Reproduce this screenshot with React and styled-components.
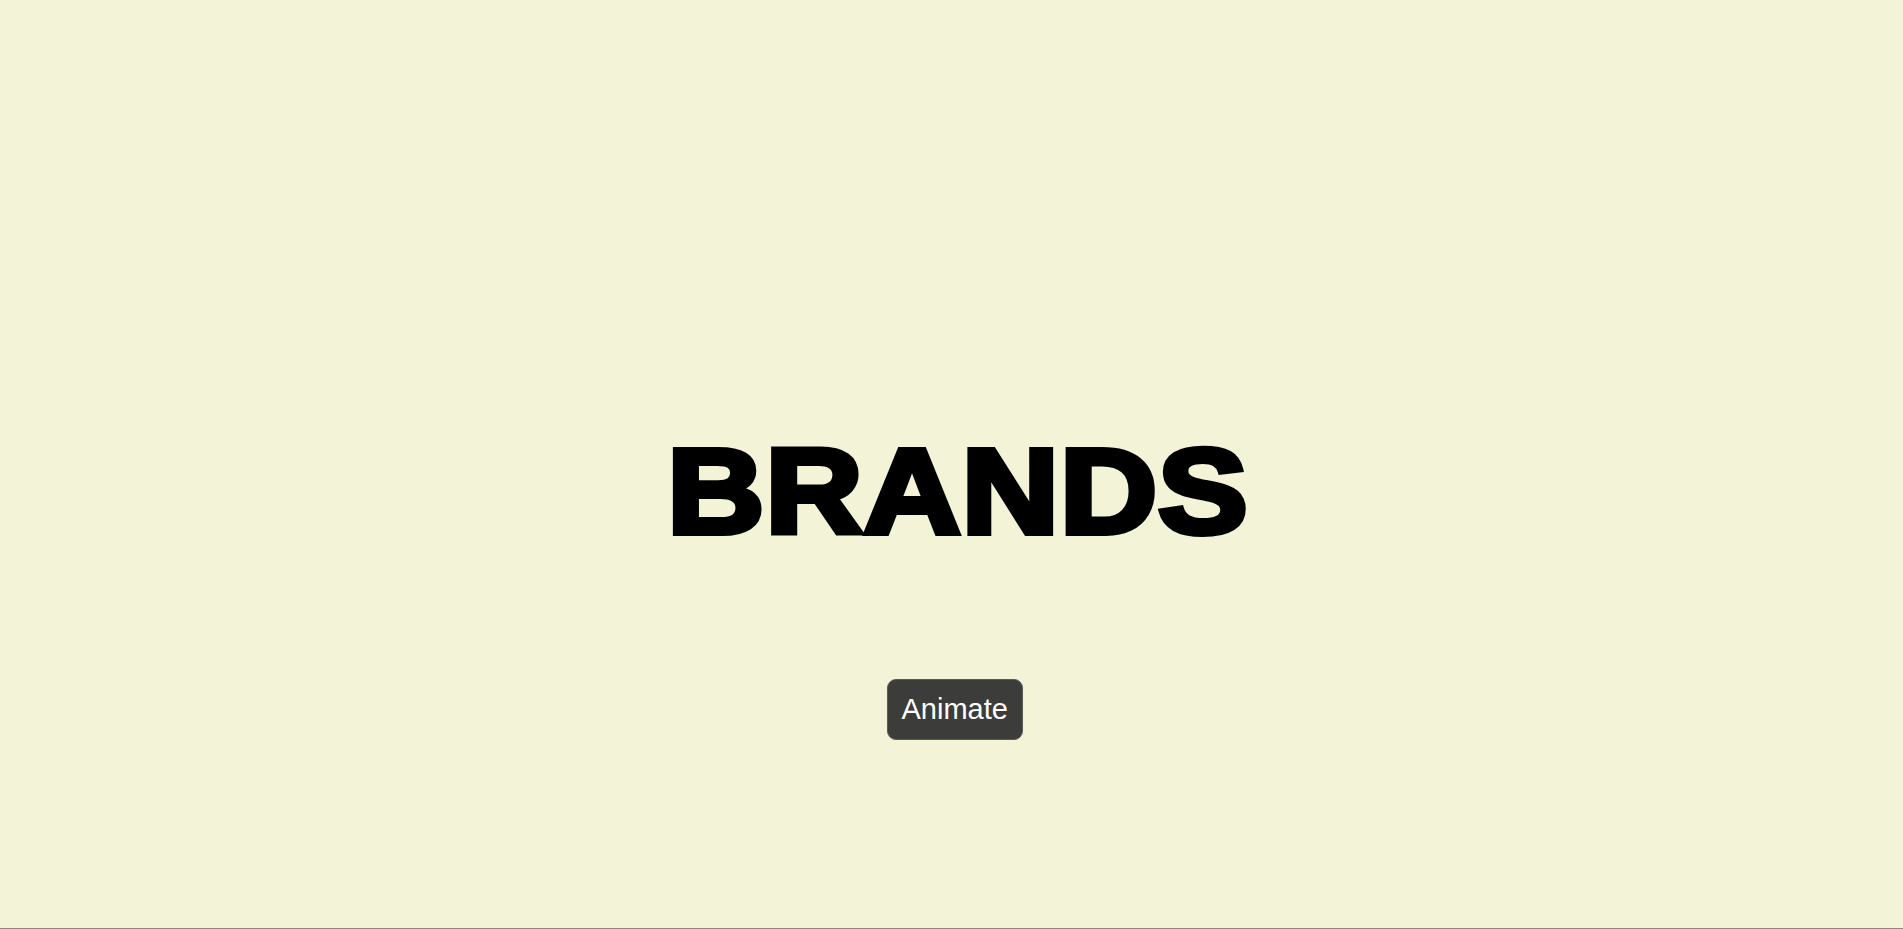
import styled, { createGlobalStyle } from "styled-components";

const GlobalStyle = createGlobalStyle`
	html, body {
		margin: 0;
		padding: 0;
		background: #f3f3d8;
		font-family: "Liberation Sans", Arial, sans-serif;
	}
`;

const App = () => {
	return (
		<>
			<GlobalStyle />
			<Page>
				<Title>BRANDS</Title>
				<AnimateButton type='button'>Animate</AnimateButton>
			</Page>
		</>
	);
};

const Page = styled.main`
	box-sizing: border-box;
	height: 100vh;
	display: flex;
	flex-direction: column;
	align-items: center;
	padding: 431px 0 0 6px;
	border-bottom: 1px solid #8a8a82;
	overflow: hidden;
`;

// heavy "black" look: bold face + stroke, widened a little
const Title = styled.h1`
	margin: 0;
	font-family: "Liberation Sans", Arial, sans-serif;
	font-weight: 700;
	font-size: 120px;
	line-height: 1;
	letter-spacing: 1px;
	color: #000;
	-webkit-text-stroke: 6px #000;
	padding-left: 6px;
	transform: scaleX(1.12);
`;

const AnimateButton = styled.button`
	margin-top: 128px;
	box-sizing: border-box;
	width: 136px;
	height: 61px;
	padding: 0 14px;
	border: 1px solid #5a5a56;
	border-radius: 9px;
	background: #3c3c3a;
	color: #fff;
	font-family: "Liberation Sans", Arial, sans-serif;
	font-size: 29px;
	cursor: pointer;
`;

export default App;
